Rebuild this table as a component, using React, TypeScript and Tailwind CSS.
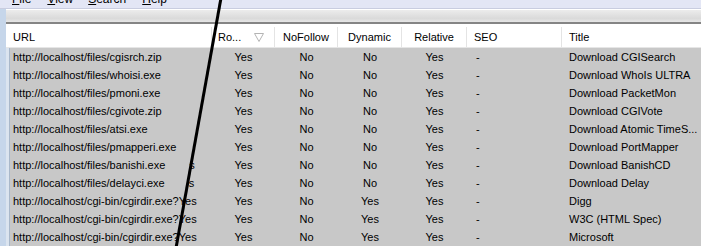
const MENU = ["File", "View", "Search", "Help"];

type Row = {
  url: string;
  ghost?: string;
  ro: string;
  noFollow: string;
  dynamic: string;
  relative: string;
  seo: string;
  title: string;
};

const ROWS: Row[] = [
  { url: "http://localhost/files/cgisrch.zip", ro: "Yes", noFollow: "No", dynamic: "No", relative: "Yes", seo: "-", title: "Download CGISearch" },
  { url: "http://localhost/files/whoisi.exe", ro: "Yes", noFollow: "No", dynamic: "No", relative: "Yes", seo: "-", title: "Download WhoIs ULTRA" },
  { url: "http://localhost/files/pmoni.exe", ro: "Yes", noFollow: "No", dynamic: "No", relative: "Yes", seo: "-", title: "Download PacketMon" },
  { url: "http://localhost/files/cgivote.zip", ro: "Yes", noFollow: "No", dynamic: "No", relative: "Yes", seo: "-", title: "Download CGIVote" },
  { url: "http://localhost/files/atsi.exe", ro: "Yes", noFollow: "No", dynamic: "No", relative: "Yes", seo: "-", title: "Download Atomic TimeS..." },
  { url: "http://localhost/files/pmapperi.exe", ro: "Yes", noFollow: "No", dynamic: "No", relative: "Yes", seo: "-", title: "Download PortMapper" },
  { url: "http://localhost/files/banishi.exe", ghost: "s", ro: "Yes", noFollow: "No", dynamic: "No", relative: "Yes", seo: "-", title: "Download BanishCD" },
  { url: "http://localhost/files/delayci.exe", ghost: "s", ro: "Yes", noFollow: "No", dynamic: "No", relative: "Yes", seo: "-", title: "Download Delay" },
  { url: "http://localhost/cgi-bin/cgirdir.exe?Yes", ro: "Yes", noFollow: "No", dynamic: "Yes", relative: "Yes", seo: "-", title: "Digg" },
  { url: "http://localhost/cgi-bin/cgirdir.exe?Yes", ro: "Yes", noFollow: "No", dynamic: "Yes", relative: "Yes", seo: "-", title: "W3C (HTML Spec)" },
  { url: "http://localhost/cgi-bin/cgirdir.exe?Yes", ro: "Yes", noFollow: "No", dynamic: "Yes", relative: "Yes", seo: "-", title: "Microsoft" },
];

function SortArrow() {
  return (
    <svg width="10" height="9" viewBox="0 0 10 9" className="ml-auto mr-[10px]">
      <path d="M0.5 0.5 H9.5 L5 8.5 Z" fill="none" stroke="#b4b4b4" strokeWidth="1" />
    </svg>
  );
}

export default function App() {
  return (
    <div
      className="relative flex h-[246px] w-[701px] flex-col overflow-hidden bg-[#c6d6ea] text-[11px] text-black"
      style={{ fontFamily: '"Liberation Sans", Arial, sans-serif' }}
    >
      {/* menu bar, mostly scrolled off the top */}
      <div className="h-[9px] shrink-0 overflow-hidden border-b border-[#c9cde0] bg-[#e3e6f5] text-[12px]">
        <div className="-mt-[7px] flex leading-[12px]">
          {MENU.map((item, i) => (
            <span
              key={item}
              className={i === 0 ? "ml-[12px]" : i === 1 ? "ml-[16px]" : i === 2 ? "ml-[15px]" : "ml-[16px]"}
            >
              <span className="underline">{item[0]}</span>
              {item.slice(1)}
            </span>
          ))}
        </div>
      </div>

      <div className="flex min-h-0 flex-1">
        <div className="w-[6px] shrink-0 bg-[#c6d6ea]" />
        <div className="flex min-w-0 flex-1 flex-col">
          {/* toolbar strip */}
          <div className="h-[13px] shrink-0 border-t border-white bg-[linear-gradient(180deg,#ececec_0%,#dadada_70%,#e6e6e6_100%)]" />
          <div className="h-[2px] shrink-0 bg-[#858585]" />

          {/* header */}
          <div className="grid h-[24px] shrink-0 grid-cols-[206px_63px_63px_64px_65px_95px_1fr] border-b border-[#e6e6e6] bg-white pt-[3px] leading-[20px]">
            <div className="border-r border-[#e4e4e4] pl-[7px]">URL</div>
            <div className="flex items-center border-r border-[#e4e4e4] pl-[6px]">
              <span>Ro...</span>
              <SortArrow />
            </div>
            <div className="border-r border-[#e4e4e4] text-center">NoFollow</div>
            <div className="border-r border-[#e4e4e4] text-center">Dynamic</div>
            <div className="border-r border-[#e4e4e4] text-center">Relative</div>
            <div className="border-r border-[#e4e4e4] pl-[7px]">SEO</div>
            <div className="pl-[7px]">Title</div>
          </div>

          {/* rows */}
          <div className="flex flex-1 border-l-[3px] border-[#dbe4ef]">
            <div className="w-[1px] bg-[#a9b8ca]" />
            <div className="flex-1 bg-[#c8c8c8]">
              {ROWS.map((row, i) => (
                <div
                  key={i}
                  className="grid h-[18px] grid-cols-[202px_63px_63px_64px_65px_95px_1fr] leading-[18px]"
                >
                  <div className="overflow-hidden whitespace-nowrap pl-[3px]">
                    {row.url}
                    {row.ghost && <span className="ml-[24px]">{row.ghost}</span>}
                  </div>
                  <div className="text-center">{row.ro}</div>
                  <div className="text-center">{row.noFollow}</div>
                  <div className="text-center">{row.dynamic}</div>
                  <div className="text-center">{row.relative}</div>
                  <div className="pl-[9px]">{row.seo}</div>
                  <div className="whitespace-nowrap pl-[7px]">{row.title}</div>
                </div>
              ))}
            </div>
          </div>
        </div>
      </div>

      {/* pen stroke drawn across the capture */}
      <svg className="pointer-events-none absolute inset-0" width="701" height="246">
        <line x1="221" y1="-2" x2="176" y2="248" stroke="#000" strokeWidth="3" />
      </svg>
    </div>
  );
}
